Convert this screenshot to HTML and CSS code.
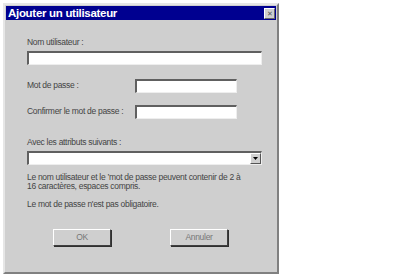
FILE: index.html
```html
<!DOCTYPE html>
<html>
<head>
<meta charset="utf-8">
<link rel="stylesheet" href="styles.css">
</head>
<body>
<div class="dialog">
  <div class="titlebar">
    <span class="title">Ajouter un utilisateur</span>
    <span class="close">&#x2715;</span>
  </div>
  <div class="content">
    <div class="label first">Nom utilisateur :</div>
    <div class="field wide"></div>
    <div class="row r1">
      <span class="rlabel">Mot de passe :</span>
      <div class="field short"></div>
    </div>
    <div class="row r2">
      <span class="rlabel">Confirmer le mot de passe :</span>
      <div class="field short"></div>
    </div>
    <div class="label attr">Avec les attributs suivants :</div>
    <div class="field wide select"><span class="arrow"><svg width="5" height="3" viewBox="0 0 5 3"><path d="M0 0h5L2.5 3z" fill="#000"/></svg></span></div>
    <div class="note n1">Le nom utilisateur et le &#8217;mot de passe peuvent contenir de 2 à<br>16 caractères, espaces compris.</div>
    <div class="note n2">Le mot de passe n'est pas obligatoire.</div>
    <div class="buttons">
      <div class="btn">OK</div>
      <div class="btn">Annuler</div>
    </div>
  </div>
</div>
</body>
</html>
```
FILE: styles.css
```css
html, body { margin: 0; padding: 0; background: #fff; }
body { font-family: "Liberation Sans", Arial, sans-serif; }
.dialog {
  margin: 3px 0 0 3px;
  width: 272px;
  height: 267px;
  background: #cfcfcf;
  border: 2px solid;
  border-color: #e6e6e6 #808080 #808080 #e6e6e6;
  display: flex;
  flex-direction: column;
}
.titlebar {
  margin: 1px 1px 0 1px;
  height: 14px;
  background: #000090;
  display: flex;
  align-items: center;
  justify-content: space-between;
  padding: 0 1px 0 2px;
}
.title { color: #fff; font-weight: bold; font-size: 11.5px; letter-spacing: -0.3px; }
.close {
  width: 9px; height: 9px;
  background: #cfcfcf;
  border: 1px solid; border-color: #fff #666 #666 #fff;
  font-size: 7px; line-height: 9px; text-align: center; color: #555;
}
.content { padding: 0 0 0 22px; font-size: 8.5px; color: #444; letter-spacing: -0.3px; }
.label.first { margin-top: 17px; }
.field {
  background: #fff;
  border-top: 2px solid #606060; border-left: 2px solid #606060;
  border-right: 1px solid #eee; border-bottom: 1px solid #eee;
  box-sizing: border-box;
}
.wide { width: 235px; height: 14px; margin-top: 4px; }
.short { width: 102px; height: 14px; }
.row { display: flex; align-items: center; }
.rlabel { width: 108px; margin-top: -2px; }
.r1 { margin-top: 14px; }
.r2 { margin-top: 12px; }
.attr { margin-top: 18px; }
.select { position: relative; }
.arrow {
  position: absolute; right: 0; top: 0;
  width: 11px; height: 11px; box-sizing: border-box;
  background: #cfcfcf; border: 1px solid; border-color: #fff #555 #555 #fff;
  display: flex; align-items: center; justify-content: center;
}
.note { line-height: 9px; }
.n1 { margin-top: 8px; }
.n2 { margin-top: 9px; }
.buttons { display: flex; gap: 59px; margin: 20px 0 0 26px; }
.btn {
  width: 58px; height: 17px; box-sizing: border-box;
  border: 1px solid; border-color: #fff #404040 #404040 #fff;
  box-shadow: 1px 1px 0 #303030;
  text-align: center; line-height: 15px; color: #777; font-size: 8.5px;
}
```
